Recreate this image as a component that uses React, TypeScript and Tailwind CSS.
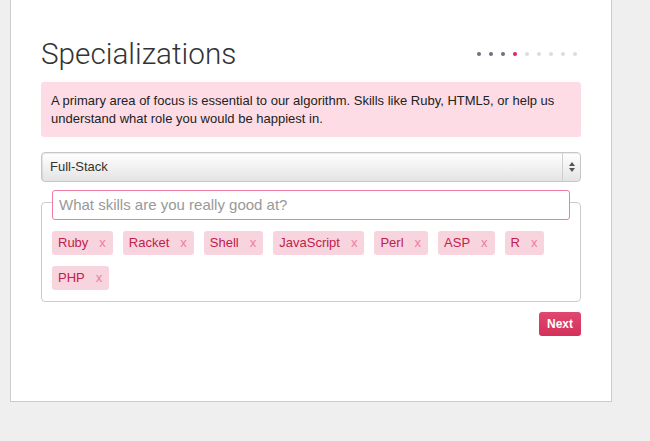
import React from 'react';

const skills = ['Ruby', 'Racket', 'Shell', 'JavaScript', 'Perl', 'ASP', 'R', 'PHP'];

// 进度点：前三个已完成，第四个为当前
const dots = ['done', 'done', 'done', 'current', 'todo', 'todo', 'todo', 'todo', 'todo'];

const SkillTag: React.FC<{ name: string }> = ({ name }) => (
  <span className="flex h-[24px] items-center rounded-[3px] bg-[#f8d4de] pl-[6px] pr-[7px] text-[13px] text-[#c2204c]">
    <span>{name}</span>
    <span className="ml-[11px] text-[13px] text-[#ea7f9e]">x</span>
  </span>
);

export default function App() {
  return (
    <div
      className="h-[441px] w-[650px] overflow-hidden bg-[#efefef]"
      style={{ fontFamily: '"Liberation Sans", Arial, sans-serif' }}
    >
      <div className="ml-[10px] h-[402px] w-[602px] border-x border-b border-[#cccccc] bg-white px-[30px] pt-[36px]">
        {/* 标题 + 进度 */}
        <div className="flex items-center justify-between">
          <h1
            className="pt-[1px] text-[29.7px] leading-[34px] text-[#333333]"
            style={{ fontFamily: 'Roboto, "Liberation Sans", sans-serif', fontWeight: 300 }}
          >
            Specializations
          </h1>
          <div className="mr-[4px] flex items-center gap-[8px]">
            {dots.map((d, i) => (
              <span
                key={i}
                className={
                  'h-[4px] w-[4px] rounded-full ' +
                  (d === 'done' ? 'bg-[#6b7280]' : d === 'current' ? 'bg-[#e0245e]' : 'bg-[#d9dde3]')
                }
              />
            ))}
          </div>
        </div>

        {/* 提示 */}
        <div className="mt-[11px] rounded-[3px] bg-[#fddce5] px-[10px] pb-[9px] pt-[10px] text-[13px] leading-[18px] text-[#222222]">
          A primary area of focus is essential to our algorithm. Skills like Ruby, HTML5, or help us
          understand what role you would be happiest in.
        </div>

        {/* 下拉选择 */}
        <div className="mt-[15px] flex h-[30px] items-stretch rounded-[4px] border border-[#c6c6c6] bg-gradient-to-b from-[#ffffff] to-[#e4e4e4] shadow-[inset_1px_1px_1px_rgba(0,0,0,0.08)]">
          <span className="flex flex-1 items-center pl-[8px] text-[13px] text-[#333333]">Full-Stack</span>
          <span className="flex w-[18px] flex-col items-center justify-center gap-[2px] border-l border-[#cfcfcf]">
            <svg width="6" height="4" viewBox="0 0 6 4">
              <path d="M3 0 L6 4 L0 4 Z" fill="#555555" />
            </svg>
            <svg width="6" height="4" viewBox="0 0 6 4">
              <path d="M0 0 L6 0 L3 4 Z" fill="#555555" />
            </svg>
          </span>
        </div>

        {/* 技能 */}
        <div className="mt-[20px] h-[100px] rounded-[4px] border border-[#cccccc] px-[10px]">
          <div className="-mt-[13px] flex h-[30px] items-center rounded-[3px] border border-[#ee7ea0] bg-white px-[6px] text-[15px] text-[#999999]">
            What skills are you really good at?
          </div>
          <div className="mt-[11px] flex flex-wrap gap-x-[10px] gap-y-[11px]">
            {skills.map((s) => (
              <SkillTag key={s} name={s} />
            ))}
          </div>
        </div>

        <div className="mt-[10px] flex justify-end">
          <button className="h-[24px] rounded-[3px] bg-gradient-to-b from-[#e0486f] to-[#d3305a] px-[8px] text-[12px] font-bold text-white">
            Next
          </button>
        </div>
      </div>
    </div>
  );
}
